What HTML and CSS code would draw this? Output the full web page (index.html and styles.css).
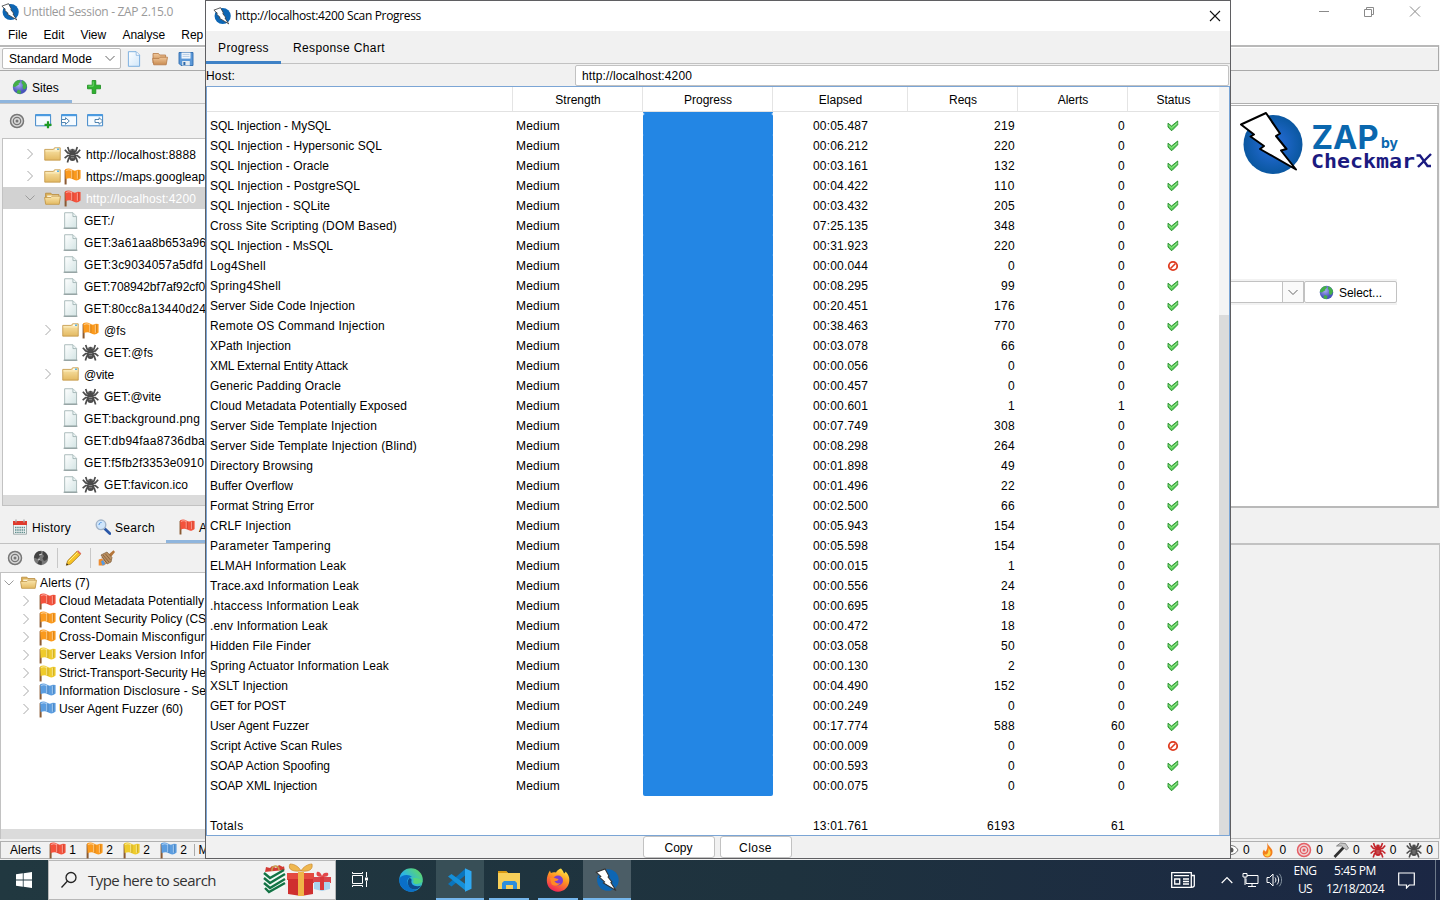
FILE: index.html
```html
<!DOCTYPE html>
<html lang="en">
<head>
<meta charset="utf-8">
<title>ZAP 2.15.0</title>
<link rel="stylesheet" href="styles.css">
</head>
<body>
<svg class="defs" width="0" height="0">
  <defs>
    <linearGradient id="gFolder" x1="0" y1="0" x2="0" y2="1"><stop offset="0" stop-color="#fbe7ae"/><stop offset="1" stop-color="#e3b961"/></linearGradient>
    <linearGradient id="gBrown" x1="0" y1="0" x2="0" y2="1"><stop offset="0" stop-color="#f0c79a"/><stop offset="1" stop-color="#c98b50"/></linearGradient>
    <linearGradient id="gPage" x1="0" y1="0" x2="1" y2="1"><stop offset="0" stop-color="#ffffff"/><stop offset="1" stop-color="#d3e4e4"/></linearGradient>
    <linearGradient id="gNew" x1="0" y1="0" x2="1" y2="1"><stop offset="0" stop-color="#ffffff"/><stop offset="1" stop-color="#cfe6fa"/></linearGradient>
    <radialGradient id="gBall"><stop offset="0" stop-color="#2a6fe0"/><stop offset="1" stop-color="#0a57a0"/></radialGradient>
    <radialGradient id="gGlobe" cx=".4" cy=".35"><stop offset="0" stop-color="#a9aef5"/><stop offset="1" stop-color="#4a55bb"/></radialGradient>
    <linearGradient id="gEdge" x1="0" y1="1" x2="1" y2="0"><stop offset="0" stop-color="#0b6fd0"/><stop offset=".45" stop-color="#2bb5e6"/><stop offset="1" stop-color="#6be04a"/></linearGradient>
    <linearGradient id="gFox" x1=".8" y1="0" x2=".3" y2="1"><stop offset="0" stop-color="#fff04a"/><stop offset=".45" stop-color="#ff9420"/><stop offset="1" stop-color="#f0205a"/></linearGradient>
  </defs>
  <symbol id="zap" viewBox="0 0 16 16"><circle cx="8.600" cy="8" r="7.200" fill="#0d66b4"/><path d="M.8 2.800 6.700.6 9.300 5.400 8.700 6l2.600 3.200-.7.5L14 15 5.600 9.900l.8-.6-3.300-3.100.8-.6z" fill="#fff" stroke="#333" stroke-width=".7"/></symbol>
  <symbol id="folder" viewBox="0 0 16 16"><path d="M.7 13.300V3.200h8.200l1-1.500h5.400v11.600z" fill="url(#gFolder)" stroke="#c49a4c" stroke-width=".8"/><path d="M10.300 3h4" stroke="#fff" stroke-width="1.200"/><path d="M12.200 3h2" stroke="#3aa5e0" stroke-width="1.200"/><path d="M1.300 4.600h13.400" stroke="#fff3cb" stroke-width=".8"/></symbol>
  <symbol id="folderopen" viewBox="0 0 16 16"><path d="M1.500 12.500V3h5l1 1.300h6.500v8z" fill="#dcb25a" stroke="#b98c40" stroke-width=".8"/><path d="M3 5.200h10.500v3H3z" fill="#fdf8e4"/><path d="M.5 7h6l1.200-1.200h7.800l-1.200 7.700H1.600z" fill="url(#gFolder)" stroke="#c49a4c" stroke-width=".8"/></symbol>
  <symbol id="openbrown" viewBox="0 0 16 16"><path d="M1 12V2.500h5.500L7.600 4h6v8z" fill="url(#gBrown)" stroke="#b57a48" stroke-width=".8"/><path d="M.6 7.400h6.500l1.200-1.200h7.200l-1.300 7.600H1.700z" fill="url(#gBrown)" stroke="#b57a48" stroke-width=".8"/></symbol>
  <symbol id="page" viewBox="0 0 16 16"><path d="M2.500.7h7.800l3.400 3.400v11H2.500z" fill="url(#gPage)" stroke="#a9baba" stroke-width=".9"/><path d="M10.300.9v3.400h3.200" fill="#eef6f6" stroke="#93a9a9" stroke-width=".7"/><path d="M1.500 15.300h13" stroke="#7f9090" stroke-width=".9"/></symbol>
  <symbol id="newpage" viewBox="0 0 16 16"><path d="M2.400.7h7.800l3.400 3.400v11.200H2.400z" fill="url(#gNew)" stroke="#72a9dc" stroke-width=".9"/><path d="M10.200.9v3.400h3.200" fill="#fff" stroke="#72a9dc" stroke-width=".7"/></symbol>
  <symbol id="save" viewBox="0 0 16 16"><path d="M1 1.500h14v13H3l-2-2z" fill="#5b98d8" stroke="#2f6cae" stroke-width=".9"/><path d="M3.500 1.600h9v6h-9z" fill="#f2f7fc"/><path d="M4.500 3.400h7M4.500 5.400h7" stroke="#9dbbdc" stroke-width=".7"/><path d="M4.200 10h7.600v4.500H4.200z" fill="#e4ebf1"/><path d="M5.400 11h2v3h-2z" fill="#2b68ab"/></symbol>
  <symbol id="flag" viewBox="0 0 16 16"><path d="M1.500 2v13.500" stroke="#8a5a33" stroke-width="1.900"/><path d="M1 1.200C3.200 0 5.600.2 7.400 1.500 9.200 3 11.500 2.600 13 1.700l2.600.2v8c-2.400 2.200-5 2.300-7.300.7C6.300 9.200 3.700 9.400 1.600 10.700z" fill="currentColor"/><path d="M7.200 1.700v7.800M12.600 2.600v7.500" stroke="#fff" stroke-opacity=".4" stroke-width="1"/><path d="M8.400 2.800v7.500M13.700 2.300v7.500" stroke="#000" stroke-opacity=".13" stroke-width="1"/><path d="M2 2.500c1.500-1 3.500-1 5-.2" stroke="#fff" stroke-opacity=".5" fill="none"/></symbol>
  <symbol id="spider" viewBox="0 0 16 16"><path d="M8 6 4.800 4.800 3.500 1M8 6l3.200-1.200L12.500 1M8 7.500 3.500 6.500.8 3.500M8 7.500l4.500-1 2.700-3M8 9H3.500L.6 11.500M8 9h4.500l2.900 2.500M8 10l-3.500 1.500L3.200 15.500M8 10l3.500 1.500 1.300 4" fill="none" stroke="currentColor" stroke-width="1.600"/><ellipse cx="8" cy="10" rx="3.300" ry="4" fill="currentColor"/><circle cx="8" cy="5.200" r="2.600" fill="currentColor"/><path d="M6.500 2.500v2M9.500 2.500v2M6.300 9h3.400M6.500 11h3" stroke="#c8c8c8" stroke-opacity=".7" stroke-width=".7"/></symbol>
  <symbol id="globe" viewBox="0 0 16 16"><circle cx="8" cy="8" r="7.200" fill="url(#gGlobe)"/><path d="M2 4.200C3.500 2 5.500 1 7.500 1l1 2-2 1.500.5 1L4.500 7 3 8 .9 7.500C1 6 1.300 5 2 4.200zM10 1.300c2.500.8 4.500 3 5 5.700l-1.500 3-2 .5-1-2.500L11 6 9.500 4zM6 10.500l3 1.500-.5 3c-2 0-3-.5-4-1.200z" fill="#43b047"/></symbol>
  <symbol id="globegrey" viewBox="0 0 16 16"><circle cx="8" cy="8" r="7.200" fill="#787878"/><path d="M2 4.200C3.500 2 5.500 1 7.500 1l1 2-2 1.500.5 2L4.500 9 .9 7.500zM10 1.300c2.500.8 4.500 3 5 5.700l-1.500 3-2.500 1-1.500-2.500L11 6 9.500 4zM6 10l3 1.500-.5 3.500-4-1.200z" fill="#434343"/><path d="m6 5 3-1M5 10l2-1" stroke="#ccc"/></symbol>
  <symbol id="target" viewBox="0 0 16 16"><circle cx="8" cy="8" r="7" fill="currentColor" fill-opacity=".18"/><g fill="none" stroke="currentColor"><circle cx="8" cy="8" r="6.500" stroke-width="1.500"/><circle cx="8" cy="8" r="3.700" stroke-width="1.300"/></g><circle cx="8" cy="8" r="1.500" fill="currentColor"/></symbol>
  <symbol id="plus" viewBox="0 0 16 16"><path d="M6.200 1.500h3.600v4.700h4.700v3.600H9.800v4.700H6.200V9.800H1.500V6.200h4.700z" fill="#2fb12f" stroke="#198c1c" stroke-width=".8"/><path d="M7.200 2.500v4.700H2.500" fill="none" stroke="#7be07b" stroke-width=".8"/></symbol>
  <symbol id="winadd" viewBox="0 0 17 16"><path d="M.6 1.600h15v11.200H.6z" fill="#f6fbff" stroke="#4288c8"/><path d="M.6 2.200h15" stroke="#4a9be2" stroke-width="2"/><path d="M13 8.300v7M9.500 11.800h7" stroke="#1d9a24" stroke-width="2.200"/></symbol>
  <symbol id="winin" viewBox="0 0 17 16"><path d="M.6 1.600h15v11.200H.6z" fill="#f6fbff" stroke="#4288c8"/><path d="M.6 2.200h15" stroke="#4a9be2" stroke-width="2"/><path d="M.5 6.500h4V4.700L8.300 8l-3.800 3.300V9.500h-4z" fill="#fff" stroke="#4178a8" stroke-width=".9"/></symbol>
  <symbol id="winout" viewBox="0 0 17 16"><path d="M.6 1.600h15v11.200H.6z" fill="#f6fbff" stroke="#4288c8"/><path d="M.6 2.200h15" stroke="#4a9be2" stroke-width="2"/><path d="M8 6.500h4V4.700L15.800 8 12 11.300V9.500H8z" fill="#fff" stroke="#4178a8" stroke-width=".9"/></symbol>
  <symbol id="calendar" viewBox="0 0 16 16"><path d="M1.500 2.500h13v12.700h-13z" fill="#eef3f3" stroke="#8e9c9c" stroke-width=".8"/><path d="M1 2h14v4H1z" fill="#e03a2c"/><path d="M4 .5v3M12 .5v3" stroke="#aaa" stroke-width="1.300"/><path d="M3 8.500h10M3 11h10M3 13.300h10" stroke="#5f8d8d" stroke-width="1.300" stroke-dasharray="1.500 .7"/></symbol>
  <symbol id="search" viewBox="0 0 16 16"><path d="m9.500 9.500 5.300 5" stroke="#2a57a8" stroke-width="2.800" stroke-linecap="round"/><circle cx="6" cy="5.800" r="4.800" fill="#cfe5fb" stroke="#a3b4c8" stroke-width="1.400"/><path d="M4 6c0-1.500 1-2.500 2.500-2.500" stroke="#4a90e0" fill="none"/></symbol>
  <symbol id="pencil" viewBox="0 0 16 16"><path d="m.8 15.300 1.300-4.600L11.500 1.300l3.300 3.300-9.500 9.400z" fill="#f7c325" stroke="#a87a1d" stroke-width=".8"/><path d="M3 11.500 12 2.500" stroke="#fff08a"/><path d="m11.500 1.200 1-1 3.300 3.300-1 1z" fill="#e46a5c"/><path d="m.8 15.300.5-2 1.500 1.500z" fill="#222"/></symbol>
  <symbol id="broom" viewBox="0 0 17 16"><path d="m10 5 5.500-4.700L17 2l-4.500 5.500z" fill="#b5763a"/><path d="m3 5 6-3 5 5.500-1 4.500-4 2z" fill="#b98f60" stroke="#7d5a37" stroke-width=".7"/><path d="m5 5 6 7M7.500 4l5 6M3.800 7l5 6" stroke="#765232" stroke-width=".7"/><path d="M.7 9.500 4 8.500l4.500 5-2.500 2H.7z" fill="#ee8d31"/><path d="M3 11.500 5 10l2.500 4-3 1.500z" fill="#549be3"/></symbol>
  <symbol id="chev" viewBox="0 0 9 12"><path d="m2 1 5 5-5 5" fill="none" stroke="#a8a8a8" stroke-width="1"/></symbol>
  <symbol id="chevd" viewBox="0 0 12 9"><path d="M1.500 2 6 6.500 10.500 2" fill="none" stroke="currentColor" stroke-width="1"/></symbol>
  <symbol id="ok" viewBox="0 0 12 12"><path d="M1 3.200 4.500 6 10.700 1v3.800L5 10.500h-.8L1 7z" fill="#55cc55" stroke="#278d2c" stroke-width=".9"/><path d="m1.500 5.200 3 2.700L10.500 3" fill="none" stroke="#b2f0a5" stroke-width=".8"/></symbol>
  <symbol id="skip" viewBox="0 0 12 12"><circle cx="6" cy="6" r="4.200" fill="#fff" stroke="#df3c20" stroke-width="1.800"/><path d="m3.500 8.500 5-5" stroke="#df3c20" stroke-width="1.600"/></symbol>
  <symbol id="flame" viewBox="0 0 16 16"><path d="M7 .5c1 3.500 5.500 5.500 5.500 9.500 0 3.500-2.200 5.500-5 5.500S2.700 13.500 2.700 11c0-1.500.7-2.500 1.300-3.500.5 1.300 1 1.800 1.800 2C8 6.500 7.500 3.500 7 .5z" fill="#f37e1c"/><path d="M8.300 6c1.500 2 2.500 3 2.300 5-.2 2-1.300 3.300-3 3.500-1.800 0-3-1-3.300-2.300 1.500.8 2.700.3 3.500-1.200.7-1.500.8-3.300.5-5z" fill="#ffd84a"/></symbol>
  <symbol id="hammer" viewBox="0 0 16 16"><path d="m1.500 15 9-9.500" stroke="#2f2f2f" stroke-width="2.600"/><path d="m3.500 4 4-3 5 .5L15.500 6l-2 2-3-2.500-2-1.500z" fill="#c6c6c6" stroke="#747474" stroke-width=".8"/></symbol>
</svg>

<main class="app">
  <header class="titlebar">
    <svg class="i18"><use href="#zap"/></svg><span class="seg" data-w="150">Untitled Session - ZAP 2.15.0</span>
    <svg class="wincontrols" viewBox="0 0 110 20"><g fill="none" stroke="#8a8a8a"><path d="M4 10.500h10M49.500 8.500h7v7h-7zM51.500 8V6.500h7v7H57M95 5.500l10 10M105 5.500l-10 10"/></g></svg>
  </header>
  <nav class="menubar"><span>File</span><span>Edit</span><span>View</span><span>Analyse</span><span>Rep</span></nav>
  <div class="toolbar">
    <div class="mode"><span data-w="83">Standard Mode</span><svg width="12" height="9"><use href="#chevd"/></svg></div>
    <svg class="i16"><use href="#newpage"/></svg><svg class="i16"><use href="#openbrown"/></svg><svg class="i16"><use href="#save"/></svg>
  </div>
  <div class="body">
    <aside class="left">
      <div class="tabs sitestabs"><div class="tab active"><svg class="i16"><use href="#globe"/></svg><span>Sites</span></div><svg class="i16 addtab"><use href="#plus"/></svg></div>
      <div class="tools"><svg class="i16 grey"><use href="#target"/></svg><svg class="i17"><use href="#winadd"/></svg><svg class="i17"><use href="#winin"/></svg><svg class="i17"><use href="#winout"/></svg></div>
      <div class="sites" id="sites"></div>
      <div class="tabs lowtabs"><div class="tab"><svg class="i16"><use href="#calendar"/></svg><span data-w="39">History</span></div><div class="tab"><svg class="i16"><use href="#search"/></svg><span data-w="40">Search</span></div><div class="tab active"><svg class="i16 red"><use href="#flag"/></svg><span>Al</span></div></div>
      <div class="tools lowtools"><svg class="i16 grey"><use href="#target"/></svg><svg class="i16"><use href="#globegrey"/></svg><i></i><svg class="i17"><use href="#pencil"/></svg><i></i><svg class="i17"><use href="#broom"/></svg></div>
      <div class="alerts" id="alerts"></div>
    </aside>
    <section class="right">
      <div class="welcome">
        <svg class="logo" width="210" height="80" viewBox="1230 107 210 80">
          <circle cx="1273" cy="145.500" r="29.500" fill="url(#gBall)"/>
          <path d="M1241 125.500 1266 114 1280 134.500 1276 137 1286.500 150 1281 151.500 1296 170.500 1260 150 1264 147 1250.500 137.500 1254 135.500z" fill="#fff" stroke="#000" stroke-width="2" stroke-linejoin="round"/>
          <text x="1311.500" y="149.500" class="zapword" textLength="67" lengthAdjust="spacingAndGlyphs">ZAP</text>
          <text x="1381" y="149" class="byword" textLength="17" lengthAdjust="spacingAndGlyphs">by</text>
          <text x="1311" y="168.500" class="cxword" textLength="104" lengthAdjust="spacingAndGlyphs">Checkmar</text>
          <path d="M1416.500 156.500h3.500l7.500 10.500h3.500M1418 168l13-13" fill="none" stroke="#1b1a80" stroke-width="2.400"/>
        </svg>
        <div class="picker"><div class="field"></div><div class="arrow"><svg width="12" height="9"><use href="#chevd"/></svg></div><div class="select"><svg class="i15"><use href="#globe"/></svg><span data-w="43">Select...</span></div></div>
      </div>
      <div class="lower"></div>
    </section>
  </div>
  <footer class="status">
    <div class="counts"><span class="lbl" data-w="31">Alerts</span><b><svg class="i17 red"><use href="#flag"/></svg>1</b><b><svg class="i17 orange"><use href="#flag"/></svg>2</b><b><svg class="i17 yellow"><use href="#flag"/></svg>2</b><b><svg class="i17 blue"><use href="#flag"/></svg>2</b><i></i><span class="cutoff">M</span></div>
    <div class="scans"><b><svg class="i16" viewBox="0 0 16 16"><path d="M1 8c3-6 11-6 14 0-3 6-11 6-14 0z" fill="#fff" stroke="#777"/><circle cx="8" cy="8" r="2.500" fill="#555"/></svg>0</b><b><svg class="i16"><use href="#flame"/></svg>0</b><b><svg class="i16 pink"><use href="#target"/></svg>0</b><b><svg class="i16"><use href="#hammer"/></svg>0</b><b><svg class="i16 crimson"><use href="#spider"/></svg>0</b><b><svg class="i16 dark"><use href="#spider"/></svg>0</b></div>
  </footer>
</main>

<section class="dialog">
  <header class="dtitle"><svg class="i18"><use href="#zap"/></svg><span class="seg" data-w="186">http://localhost:4200 Scan Progress</span><svg class="dclose" width="12" height="12" viewBox="0 0 12 12"><path d="m1 1 10 10M11 1 1 11" stroke="#111" stroke-width="1.100"/></svg></header>
  <div class="dtabs"><div class="dtab on"><span data-w="51">Progress</span></div><div class="dtab"><span data-w="92">Response Chart</span></div></div>
  <div class="host"><span data-w="29">Host:</span><div class="hostfield"><span data-w="110">http://localhost:4200</span></div></div>
  <div class="grid">
    <div class="main">
      <div class="row head"><div></div><div>Strength</div><div>Progress</div><div>Elapsed</div><div>Reqs</div><div>Alerts</div><div>Status</div></div>
      <div class="rows" id="rows"></div>
    </div>
    <div class="scroll"><div class="thumb"></div></div>
  </div>
  <div class="buttons"><div class="btn">Copy</div><div class="btn"><span data-w="33">Close</span></div></div>
</section>

<footer class="taskbar">
  <div class="start"><svg width="16" height="16" viewBox="0 0 16 16"><path d="M0 2.200 6.800 1.300v6.300H0zM7.600 1.200 16 0v7.600H7.600zM0 8.400h6.800v6.300L0 13.800zM7.600 8.400H16V16l-8.400-1.200z" fill="#fff"/></svg></div>
  <div class="searchbox"><svg width="18" height="18" viewBox="0 0 18 18"><circle cx="11" cy="6.500" r="5" fill="none" stroke="#222" stroke-width="1.300"/><path d="m7.500 10-6 6.500" stroke="#222" stroke-width="1.300"/></svg><span data-w="128">Type here to search</span>
    <svg class="gifts" width="70" height="34" viewBox="0 0 70 34">
      <path d="M3 9 4 4l4 1 2-2 4 2 3-3 4 2 1-1 1 6H3z" fill="#d33b35"/><path d="M10 8c-1-6 7-7 7-1" fill="none" stroke="#c79a4b" stroke-width="1.600"/>
      <path d="M2 9l21-2v18L7 30l-5-3z" fill="#f4faf5"/><path d="m2 10 6 5L22 7M2 15l6 5 15-9M2 20l6 5 15-9M3 25l4 4 16-9" fill="none" stroke="#137345" stroke-width="2.400"/>
      <path d="M25 10h27v7H25z" fill="#e44a40"/><path d="M26 16h25v15l-12 2-13-2z" fill="#cf2f2f"/><path d="M36 9h6v24h-6z" fill="#f0b447"/><path d="M39 8C28 9 26 5 28 1c5 0 9 3 11 7 2-4 7-7 11-7 1 5-2 8-11 7z" fill="#efb74f" stroke="#c98a2c" stroke-width=".7"/>
      <path d="M51 14h18v6H51z" fill="#d9444a"/><path d="M52 19h16v7l-8 2-8-2z" fill="#a9d3ee"/><path d="M58 14h4v13h-4z" fill="#d9363a"/><path d="M60 14c-6 0-6-3-5-5 3-1 4 2 5 4 1-3 3-4 6-3 1 3-1 4-6 4z" fill="#e2474a"/>
    </svg></div>
  <div class="tbi tview"><svg width="18" height="18" viewBox="0 0 18 18"><g fill="none" stroke="#fff"><path d="M1.500 4.500h10v8h-10zM1.500 1v1.500h10V1M1.500 16v-1.500h10V16M15.500 1v5M15.500 10v6"/></g><path d="M14 6.500h3v3h-3z" fill="#fff"/></svg></div>
  <div class="tbi edge"><svg width="24" height="24" viewBox="0 0 24 24"><circle cx="12" cy="12" r="11.800" fill="url(#gEdge)"/><path d="M.3 11C2 6.500 10 5.500 13 9c-4 0-6 4-4 8 2 4 6 5.500 9 5C11 26 0 22 .3 11z" fill="#0a6fc8"/><path d="M10.500 10c-3 3-2 8 1.500 10.500 3 2 7 1.500 10.500-3-6 2-11-.5-10-5 .2-1 0-2-2-2.500z" fill="#0d4b8c"/><path d="M13.500 10c1.500 1.500 1.500 3 .5 4 1 3 6 2.500 9.500-.5-.5-1.500-4-4-10-3.500z" fill="#55d67c"/></svg></div>
  <div class="tbi code on"><svg width="24" height="24" viewBox="0 0 24 24"><path d="M17 1v6.500L3.500 18.500 0 16z" fill="#0a75bd"/><path d="M0 8.500 3.500 6 18 16.500V23z" fill="#1590d9"/><path d="m17 .3 6.500 3v17.500l-6.500 3z" fill="#2fa9f2"/></svg></div>
  <div class="tbi files"><svg width="22" height="20" viewBox="0 0 22 20"><path d="M0 1h8l2 2h12v16H0z" fill="#f7cf59"/><path d="M0 1h8l2 2H0z" fill="#d99a13"/><path d="M4 19v-6l2-2h11l2 2v6h-4v-4H8v4z" fill="#2f8edb"/></svg></div>
  <div class="tbi fox"><svg width="24" height="24" viewBox="0 0 24 24"><path d="M15 .5c2 2 2.500 3.500 3 5 1-.5 1.500-1.500 1.500-2C23 7 23.500 10 23.300 13c-.5 6-5 10.700-11.300 10.700S.8 19 .8 12.500C.8 8.500 2 5.500 4 2.500c.3 1 .5 2 1 2.500 1.500-1 3.500-1 5-.5C11 2.500 13 1 15 .5z" fill="url(#gFox)"/><circle cx="12" cy="12.500" r="5" fill="#7c3fd0"/><path d="M4 10c3-1.500 6 .5 8.500 1-.5 2-2.500 2-4 2 1 2 3 3 6 2-2 3-7 3.500-9 1z" fill="#ff8a24"/></svg></div>
  <div class="tbi zp on"><svg width="24" height="24"><use href="#zap"/></svg></div>
  <div class="tray">
    <svg width="24" height="18" viewBox="0 0 24 18"><g fill="none" stroke="#fff" stroke-width="1.300"><path d="M.7 1.700h19.600v14.600H.7zM20.300 4.500h3v10c0 1-.8 1.800-3 1.800M3 4.700h15M12 8h6M12 10.500h6M12 13h6M3.700 8h5v5h-5z"/></g></svg>
    <svg class="up" width="12" height="8" viewBox="0 0 12 8"><path d="m.7 7 5.300-5.500L11.300 7" fill="none" stroke="#fff" stroke-width="1.200"/></svg>
    <svg class="net" width="17" height="16" viewBox="0 0 17 16"><path d="M5 3.500h11v8H4v-5M10 12v3M6 14.500h8M1 1.500h4v3.500H1zM3 5v8" fill="none" stroke="#fff"/></svg>
    <svg class="vol" width="17" height="16" viewBox="0 0 17 16"><path d="M1 5.500h2.500L7 2v12l-3.500-3.500H1zM9 5.500c1.200 1.500 1.200 3.500 0 5M11 3.500c2.200 2.500 2.200 6.500 0 9" fill="none" stroke="#fff"/><path d="M13.300 1.800c3 3.500 3 9 0 12.500" fill="none" stroke="#8493a0"/></svg>
    <div class="two lang"><span data-w="23">ENG</span><span data-w="14">US</span></div>
    <div class="two clock"><span data-w="42">5:45 PM</span><span data-w="58">12/18/2024</span></div>
    <svg class="note" width="17" height="17" viewBox="0 0 17 17"><path d="M.7 1h15.600v12h-5L8.500 16v-3H.7z" fill="none" stroke="#fff" stroke-width="1.200"/></svg>
    <div class="peek"></div>
  </div>
</footer>
<script src="app.js"></script>
</body>
</html>
```
FILE: styles.css
```css
* { box-sizing: border-box; }
body { margin: 0; width: 1440px; height: 900px; overflow: hidden; position: relative; display: flex; flex-direction: column; background: #f1f1f1; color: #000; font: 12px/16px "Liberation Sans", Arial, sans-serif; }
span, b { white-space: nowrap; font-weight: 400; }
svg { flex: none; display: block; }
.defs { position: absolute; }
.seg, .two, .searchbox { font-family: "Open Sans", "Noto Sans", sans-serif; }
.i15 { width: 15px; height: 15px; }
.i16 { width: 16px; height: 16px; }
.i17 { width: 17px; height: 17px; }
.i18 { width: 18px; height: 18px; }
.red { color: #f4523c; } .orange { color: #fb9a1d; } .yellow { color: #efcb2c; } .blue { color: #5b9de0; }
.grey { color: #777; } .pink { color: #e55f66; } .crimson { color: #c3242a; } .dark { color: #4b4b4b; }

.app { height: 860px; display: flex; flex-direction: column; }
.titlebar { height: 24px; background: #fff; display: flex; align-items: center; padding: 0 15px 1px 1px; gap: 4px; color: #999; }
.wincontrols { width: 110px; height: 20px; margin: -2px 0 0 auto; }
.menubar { height: 21px; background: #fff; display: flex; align-items: center; gap: 16.200px; padding-left: 8px; }
.toolbar { height: 26px; border: 1px solid #aaa; border-left: 0; box-shadow: inset 0 1px #fff; margin-right: 1px; border-top: 2px solid #b9b9b9; display: flex; align-items: center; padding-left: 2px; gap: 10px; }
.mode { width: 119px; height: 21px; border: 1px solid #bdbdbd; border-radius: 2px; background: #fff; display: flex; align-items: center; justify-content: space-between; padding: 0 4px 0 6px; margin-right: -5px; color: #000; }
.mode svg, .arrow svg { color: #666; }
.body { flex: 1; display: flex; min-height: 0; }
.left { width: 206px; overflow: hidden; display: flex; flex-direction: column; }
.tabs { display: flex; border-bottom: 1px solid #c2c2c2; }
.tab { display: flex; align-items: center; gap: 4px; }
.tab span { padding-top: 1px; }
.tab.active { box-shadow: inset 0 -3px #8fb5dd; }
.sitestabs { height: 33px; align-items: stretch; }
.sitestabs .tab { width: 72px; padding-left: 12px; }
.addtab { margin: 8px 0 0 14px; }
.tools { height: 34px; display: flex; align-items: center; padding: 0 0 1px 9px; gap: 9px; }
.tools .i16 + .i17 { margin-left: 1px; }
.tools .i17 { height: 16px; }
.sites { height: 368px; border: 1px solid #c2c2c2; border-right: 0; margin-left: 2px; background: #fff; padding-top: 4px; }
.sites::after, .alerts::after { content: ""; display: block; height: 10px; background: #dbdbdb; }
.trow { height: 22px; display: flex; align-items: center; gap: 4px; padding-left: 21px; }
.trow.child { padding-left: 39px; }
.trow.sel { background: #d2d2d2; color: #fff; }
.trow .tw { width: 12px; height: 12px; margin-right: 4px; color: #9c9c9c; }
.trow .i17 + .i17 { margin-left: -1px; }
.trow span { padding: 1px 0 0 1px; }
.lowtabs { height: 33px; margin-top: 5px; }
.lowtabs .tab { padding: 0 11px 0 12px; }
.lowtabs .tab + .tab { padding-left: 13px; }
.lowtools { height: 29px; border-bottom: 1px solid #c2c2c2; padding: 0 0 0 7px; gap: 10px; }
.lowtools i { width: 1px; height: 20px; background: #c8c8c8; margin: 0 -3px 0 -2px; }
.alerts { flex: 1; background: #fff; border-left: 1px solid #c2c2c2; display: flex; flex-direction: column; }
.alerts::after { margin-top: auto; }
.arow { height: 18px; display: flex; align-items: center; gap: 3px; padding-left: 19px; }
.arow.top { padding-left: 2px; height: 19px; }
.arow .tw { width: 12px; height: 12px; margin-right: 4px; color: #9c9c9c; }
.arow.top .tw { margin-right: 2px; }
.right { flex: 1; display: flex; flex-direction: column; }
.welcome { margin-top: 32px; height: 405px; margin-right: 1px; border: 2px solid #b9b9b9; border-top: 3px double #b0b0b0; background: #fff; display: flex; flex-direction: column; align-items: flex-end; }
.logo { margin: 0 -3px 0 0; }
.zapword { font: 700 33px Inter, sans-serif; fill: #0a67ae; }
.byword { font: 700 14px Inter, sans-serif; fill: #0a67ae; }
.cxword { font: 700 19px "DejaVu Sans Mono", monospace; fill: #1b1a80; }
.picker { height: 26px; display: flex; background: #f2f2f2; margin: 93px 40px 0 0; padding: 2px 0; width: 400px; }
.field { flex: 1; background: #fff; border: 1px solid #c2c2c2; }
.arrow { width: 21px; border: 1px solid #c2c2c2; border-left: 0; background: #fafafa; display: grid; place-items: center; }
.select { width: 93px; border: 1px solid #c2c2c2; border-radius: 2px; background: #fff; display: flex; align-items: center; gap: 5px; padding: 1px 0 0 14px; }
.lower { flex: 1; margin-top: 35px; border: 1px solid #c2c2c2; border-top-width: 2px; }
.status { height: 18px; margin: 2px 1px 1px 0; border: 1px solid #b0b0b0; display: flex; align-items: center; justify-content: space-between; }
.counts, .scans { display: flex; align-items: center; }
.counts { gap: 10.300px; padding-left: 9px; }
.counts .lbl { margin-right: -2px; }
.counts b, .scans b { display: flex; align-items: center; gap: 3px; }
.counts i { width: 1px; height: 12px; background: #aaa; margin: 0 -7px 0 -3px; }
.scans { gap: 10px; padding-right: 5px; }
.scans b { gap: 4px; }

.dialog { position: absolute; left: 205px; top: 0; width: 1026px; height: 859px; border: 1px solid #5f5f62; background: #f1f1f1; display: flex; flex-direction: column; }
.dtitle { height: 30px; background: #fff; display: flex; align-items: center; gap: 4px; padding: 0 9px 0 7px; }
.dclose { margin-left: auto; }
.dtabs { height: 33px; display: flex; border-bottom: 1px solid #c2c2c2; }
.dtab { padding: 9px 12px 0; }
.dtab.on { box-shadow: inset 0 -3px #3f82c6; width: 75px; height: 33px; }
.host { height: 22px; display: flex; align-items: center; justify-content: space-between; padding-top: 1px; }
.hostfield { width: 654px; height: 21px; margin-right: 1px; background: #fff; border: 1px solid #c2c2c2; border-radius: 2px; padding: 2px 0 0 6px; display: flex; }
.grid { height: 750px; border: 1px solid #7ba5d5; background: #fff; display: flex; }
.main { width: 1012px; display: flex; flex-direction: column; }
.row { display: grid; grid-template-columns: 306px 130px 130px 135px 110px 110px 91px; height: 20px; }
.row > div { line-height: 20px; white-space: nowrap; }
.head { height: 25px; border-bottom: 1px solid #e2e2e2; text-align: center; }
.head > div { line-height: 26px; height: 24px; border-right: 1px solid #e4e4e4; padding-left: 1px; }
.head > div:last-child { border: 0; padding: 0; }
.rows { height: 723px; overflow: hidden; display: flex; flex-direction: column; justify-content: flex-end; padding-bottom: 1px; }
.rows .row { flex: none; }
.n, .s { padding: 2px 0 0 3px; }
.p { background: #2386e4; border-radius: 2px; }
.e { padding-top: 2px; text-align: center; }
.r { padding: 2px 3px 0 0; text-align: right; }
.row .st { display: grid; place-items: center; padding: 2px 1px 0 0; }
.scroll { flex: 1; background: #f4f4f4; }
.thumb { margin-top: 228px; height: 520px; background: #dbdbdb; }
.buttons { display: flex; justify-content: center; gap: 5px; padding-right: 2px; }
.btn { width: 72px; height: 22px; border: 1px solid #c2c2c2; border-radius: 3px; background: #fff; text-align: center; line-height: 22px; }

.taskbar { height: 40px; background: linear-gradient(90deg, #213840, #1e323e 55%, #1b2744); display: flex; }
.start { width: 48px; display: grid; place-items: center; }
.searchbox { width: 288px; background: #f1f1f1; border: 1px solid #b8b8b8; display: flex; align-items: center; padding-left: 11px; color: #333; font-size: 15px; }
.searchbox span { margin-left: 10px; }
.gifts { margin: 0 3px 0 auto; }
.tbi { display: grid; place-items: center; width: 48px; }
.tview { width: 48px; }
.edge { width: 52px; padding-left: 2px; }
.code.on { background: #384f57; }
.files, .fox { width: 40px; }
.files { margin: 0 9px 0 5px; }
.zp.on { background: #4b5d66; margin-left: 5px; }
.code, .files, .fox, .zp { box-shadow: inset 0 -2px #75b6ec; }
.tray { margin-left: auto; display: flex; align-items: center; color: #fff; }
.up { margin-left: 26px; }
.net { margin-left: 9px; }
.vol { margin-left: 7px; }
.two { display: flex; flex-direction: column; align-items: center; line-height: 18px; font-size: 12px; }
.lang { width: 24px; margin-left: 10px; }
.clock { width: 60px; margin-left: 8px; }
.note { margin-left: 13px; }
.peek { width: 1px; height: 40px; background: #6d7a8a; margin: 0 4px 0 20px; }
```
FILE: app.js
```js
const rules = `SQL Injection - MySQL|00:05.487|219|0|121
SQL Injection - Hypersonic SQL|00:06.212|220|0|172
SQL Injection - Oracle|00:03.161|132|0|119
SQL Injection - PostgreSQL|00:04.422|110|0|150
SQL Injection - SQLite|00:03.432|205|0|120
Cross Site Scripting (DOM Based)|07:25.135|348|0|187
SQL Injection - MsSQL|00:31.923|220|0|123
Log4Shell|00:00.044|0|0|56|skip
Spring4Shell|00:08.295|99|0|71
Server Side Code Injection|00:20.451|176|0|145
Remote OS Command Injection|00:38.463|770|0|175
XPath Injection|00:03.078|66|0|81
XML External Entity Attack|00:00.056|0|0|138
Generic Padding Oracle|00:00.457|0|0|131
Cloud Metadata Potentially Exposed|00:00.601|1|1|197
Server Side Template Injection|00:07.749|308|0|167
Server Side Template Injection (Blind)|00:08.298|264|0|207
Directory Browsing|00:01.898|49|0|103
Buffer Overflow|00:01.496|22|0|83
Format String Error|00:02.500|66|0|104
CRLF Injection|00:05.943|154|0|81
Parameter Tampering|00:05.598|154|0|121
ELMAH Information Leak|00:00.015|1|0|136
Trace.axd Information Leak|00:00.556|24|0|149
.htaccess Information Leak|00:00.695|18|0|149
.env Information Leak|00:00.472|18|0|118
Hidden File Finder|00:03.058|50|0|101
Spring Actuator Information Leak|00:00.130|2|0|179
XSLT Injection|00:04.490|152|0|78
GET for POST|00:00.249|0|0|76
User Agent Fuzzer|00:17.774|588|60|99
Script Active Scan Rules|00:00.009|0|0|132|skip
SOAP Action Spoofing|00:00.593|0|0|120
SOAP XML Injection|00:00.075|0|0|107`.split('\n').map(l => l.split('|'));

const num = t => t ? `<span data-w="${t.length * 7}">${t}</span>` : '';
const cells = (n, w, s, p, e, r, a, st) =>
  `<div class="row"><div class="n">${n && `<span data-w="${w}">${n}</span>`}</div><div class="s">${s && `<span data-w="44">${s}</span>`}</div><div class="${p}"></div><div class="e">${e && `<span data-w="55">${e}</span>`}</div><div class="r">${num(r)}</div><div class="r">${num(a)}</div><div class="st">${st}</div></div>`;

document.getElementById('rows').innerHTML =
  cells('', 0, '', 'p', '', '', '', '') +
  rules.map(([n, e, r, a, w, st]) => cells(n, w, 'Medium', 'p', e, r, a, `<svg width="12" height="12"><use href="#${st || 'ok'}"/></svg>`)).join('') +
  cells('', 0, '', '', '', '', '', '') +
  cells('Totals', 33.5, '', '', '13:01.761', '6193', '61', '');

const twisty = { '>': '<svg class="tw"><use href="#chev"/></svg>', 'v': '<svg class="tw"><use href="#chevd"/></svg>', '': '<svg class="tw"></svg>' };
const icon = (id, cls = '') => `<svg class="i17 ${cls}"><use href="#${id}"/></svg>`;

const sites = [
  ['', '>', icon('folder') + icon('spider', 'dark'), 'http://localhost:8888', 111],
  ['', '>', icon('folder') + icon('flag', 'orange'), 'https://maps.googleap', 120],
  ['sel', 'v', icon('folderopen') + icon('flag', 'red'), 'http://localhost:4200', 111],
  ['child', '', icon('page'), 'GET:/', 31],
  ['child', '', icon('page'), 'GET:3a61aa8b653a96', 123],
  ['child', '', icon('page'), 'GET:3c9034057a5dfd', 120],
  ['child', '', icon('page'), 'GET:708942bf7af92cf0', 122],
  ['child', '', icon('page'), 'GET:80cc8a13440d24', 123],
  ['child', '>', icon('folder') + icon('flag', 'orange'), '@fs', 23],
  ['child', '', icon('page') + icon('spider', 'dark'), 'GET:@fs', 50],
  ['child', '>', icon('folder'), '@vite', 31],
  ['child', '', icon('page') + icon('spider', 'dark'), 'GET:@vite', 58],
  ['child', '', icon('page'), 'GET:background.png', 117],
  ['child', '', icon('page'), 'GET:db94faa8736dba', 122],
  ['child', '', icon('page'), 'GET:f5fb2f3353e0910', 121],
  ['child', '', icon('page') + icon('spider', 'dark'), 'GET:favicon.ico', 85]
];
document.getElementById('sites').innerHTML = sites.map(([c, t, ic, s, w]) => `<div class="trow ${c}">${twisty[t]}${ic}<span data-w="${w}">${s}</span></div>`).join('');

const alerts = [['red', 'Cloud Metadata Potentially', 145], ['orange', 'Content Security Policy (CS', 147], ['orange', 'Cross-Domain Misconfigur', 146], ['yellow', 'Server Leaks Version Infor', 146], ['yellow', 'Strict-Transport-Security He', 147], ['blue', 'Information Disclosure - Se', 147], ['blue', 'User Agent Fuzzer (60)', 124]];
document.getElementById('alerts').innerHTML =
  `<div class="arow top">${twisty.v}${icon('folderopen')}<span data-w="50">Alerts (7)</span></div>` +
  alerts.map(([c, s, w]) => `<div class="arow">${twisty['>']}${icon('flag', c)}<span data-w="${w}">${s}</span></div>`).join('');

document.querySelectorAll('[data-w]').forEach(el => {
  const w = el.getBoundingClientRect().width;
  el.style.letterSpacing = (el.dataset.w - w) / el.textContent.length + 'px';
});
```
